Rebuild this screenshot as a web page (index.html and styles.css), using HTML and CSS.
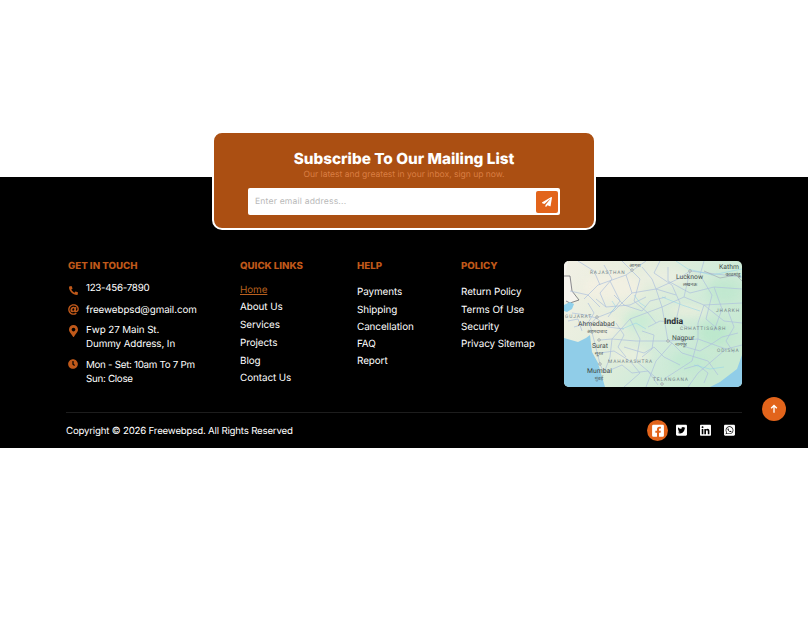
FILE: index.html
```html
<!DOCTYPE html>
<html lang="en">
<head>
<meta charset="utf-8">
<title>Footer</title>
<link rel="stylesheet" href="styles.css">
</head>
<body>
<div class="top">
  <section class="card">
    <h2 class="card-title">Subscribe To Our Mailing List</h2>
    <p class="card-sub">Our latest and greatest in your inbox, sign up now.</p>
    <form class="sub-form">
      <span class="placeholder">Enter email address...</span>
      <span class="send">
        <svg class="send-icon" viewBox="0 0 512 512"><path d="M476 3.2L12.5 270.6c-18.1 10.4-15.8 35.6 2.2 43.2L121 358.4l287.3-253.2c5.5-4.9 13.3 2.6 8.6 8.3L176 407v80.5c0 23.6 28.5 32.9 42.5 15.8L282 426l124.6 52.2c14.2 6 30.4-2.9 33-18.2l72-432C515 7.8 493.3-6.8 476 3.2z"/></svg>
      </span>
    </form>
  </section>
</div>
<footer class="footer">
  <div class="columns">
    <div class="col col-contact">
      <h3 class="heading">GET IN TOUCH</h3>
      <ul class="contact">
        <li class="contact-item contact-phone"><span class="c-icon"><svg class="ic-phone" viewBox="0 0 512 512"><path transform="translate(512 0) scale(-1 1)" d="M493.4 24.6l-104-24c-11.3-2.6-22.9 3.3-27.5 13.9l-48 112c-4.2 9.8-1.4 21.3 6.9 28l60.6 49.6c-36 76.7-98.9 140.5-177.2 177.2l-49.6-60.6c-6.8-8.3-18.2-11.1-28-6.9l-112 48C3.9 366.5-2 378.1.6 389.4l24 104C27.1 504.2 36.7 512 48 512c256.1 0 464-207.5 464-464 0-11.2-7.7-20.9-18.6-23.4z"/></svg></span><span class="c-tight">123-456-7890</span></li>
        <li class="contact-item"><span class="c-icon"><svg class="ic-at" viewBox="0 0 512 512"><path d="M256 8C118.941 8 8 118.919 8 256c0 137.059 110.919 248 248 248 48.154 0 95.342-14.14 135.408-40.223 12.005-7.815 14.625-24.288 5.552-35.372l-10.177-12.433c-7.671-9.371-21.179-11.667-31.373-5.129C325.92 429.757 291.314 440 256 440c-101.458 0-184-82.542-184-184S154.542 72 256 72c100.139 0 184 57.619 184 160 0 38.786-21.093 79.742-58.17 83.693-17.349-.454-16.91-12.857-13.476-30.024l23.433-121.11C394.653 149.75 383.308 136 368.225 136h-44.981a13.518 13.518 0 0 0-13.432 11.993l-.01.092c-14.697-17.901-40.448-21.775-59.971-21.775-74.58 0-137.831 62.234-137.831 151.46 0 65.303 36.785 105.87 96 105.87 26.984 0 57.369-15.637 74.991-38.333 9.522 34.104 40.613 34.103 70.71 34.103C462.609 379.41 504 307.798 504 232 504 95.653 394.023 8 256 8zm-21.68 304.43c-22.249 0-36.07-15.623-36.07-40.771 0-44.993 30.779-72.729 58.63-72.729 22.292 0 35.601 15.241 35.601 40.77 0 45.061-33.875 72.73-58.161 72.73z"/></svg></span><span>freewebpsd@gmail.com</span></li>
        <li class="contact-item"><span class="c-icon"><svg class="ic-pin" viewBox="0 0 384 512"><path d="M172.268 501.67C26.97 291.031 0 268.413 0 192 0 85.961 85.961 0 192 0s192 85.961 192 192c0 76.413-26.97 99.031-172.268 309.67-9.535 13.774-29.93 13.773-39.464 0zM192 272c44.183 0 80-35.817 80-80s-35.817-80-80-80-80 35.817-80 80 35.817 80 80 80z"/></svg></span><span>Fwp 27 Main St.<br>Dummy Address, In</span></li>
        <li class="contact-item"><span class="c-icon"><svg class="ic-clock" viewBox="0 0 512 512"><path d="M256,8C119,8,8,119,8,256S119,504,256,504,504,393,504,256,393,8,256,8Zm92.49,313h0l-20,25a16,16,0,0,1-22.49,2.5h0l-67-49.72a40,40,0,0,1-15-31.23V112a16,16,0,0,1,16-16h32a16,16,0,0,1,16,16V256l58,42.5A16,16,0,0,1,348.49,321Z"/></svg></span><span class="c-tight">Mon - Set: 10am To 7 Pm<br>Sun: Close</span></li>
      </ul>
    </div>
    <div class="col">
      <h3 class="heading">QUICK LINKS</h3>
      <ul class="links links-quick">
        <li><a class="link link-active">Home</a></li>
        <li><a class="link">About Us</a></li>
        <li><a class="link">Services</a></li>
        <li><a class="link">Projects</a></li>
        <li><a class="link">Blog</a></li>
        <li><a class="link">Contact Us</a></li>
      </ul>
    </div>
    <div class="col">
      <h3 class="heading">HELP</h3>
      <ul class="links">
        <li><a class="link">Payments</a></li>
        <li><a class="link">Shipping</a></li>
        <li><a class="link">Cancellation</a></li>
        <li><a class="link">FAQ</a></li>
        <li><a class="link">Report</a></li>
      </ul>
    </div>
    <div class="col">
      <h3 class="heading">POLICY</h3>
      <ul class="links">
        <li><a class="link">Return Policy</a></li>
        <li><a class="link">Terms Of Use</a></li>
        <li><a class="link">Security</a></li>
        <li><a class="link">Privacy Sitemap</a></li>
      </ul>
    </div>
    <div class="map">
      <svg class="map-svg" viewBox="0 0 178 126">
        <defs>
          <linearGradient id="land" x1="0" y1="0" x2="1" y2="0.5">
            <stop offset="0" stop-color="#f2f0e5"/>
            <stop offset="0.4" stop-color="#e6eedd"/>
            <stop offset="0.75" stop-color="#d0ebd9"/>
            <stop offset="1" stop-color="#c8e9d3"/>
          </linearGradient>
          <filter id="soft"><feGaussianBlur stdDeviation="0.3"/></filter>
          <filter id="softer"><feGaussianBlur stdDeviation="4"/></filter>
        </defs>
        <rect width="178" height="126" fill="url(#land)"/>
        <g filter="url(#softer)" opacity="0.75">
          <ellipse cx="48" cy="26" rx="30" ry="14" fill="#f4f0e3"/>
          <ellipse cx="100" cy="16" rx="26" ry="9" fill="#ecefe2"/>
          <ellipse cx="125" cy="50" rx="20" ry="6" fill="#eeeedd"/>
          <ellipse cx="40" cy="66" rx="14" ry="10" fill="#f2efe1"/>
          <ellipse cx="66" cy="95" rx="20" ry="8" fill="#edf0df"/>
          <ellipse cx="75" cy="60" rx="14" ry="10" fill="#c4ebd3"/>
          <ellipse cx="150" cy="72" rx="16" ry="12" fill="#b8e7ca"/>
          <ellipse cx="125" cy="100" rx="18" ry="10" fill="#bfe9d0"/>
          <ellipse cx="160" cy="30" rx="16" ry="12" fill="#bde7cd"/>
        </g>
        <path d="M0 0H4L1 15H6L8 30L14 38L5 42L0 40Z" fill="#f6f4ee"/>
        <path d="M0 15H6L8 30L15 39L6 42L2 40" fill="none" stroke="#5b5b66" stroke-width="0.7"/>
        <path d="M0 44L6 41L10 43L8 48L3 51L0 50Z" fill="#8fd0ea" filter="url(#soft)"/>
        <path d="M0 77L14 81L22 77L26 74L28 91L34 102L41 126H0Z" fill="#90cde8"/>
        <path d="M178 94L173 108L156 121L146 126H178Z" fill="#90cde8"/>
        <g filter="url(#soft)" fill="none" stroke="#aec0dc" stroke-width="0.7" stroke-linejoin="round">
          <path d="M20 38L34 24L62 14L82 0"/>
          <path d="M62 14L68 32L50 50L32 57L26 64L30 79L36 103L40 112"/>
          <path d="M68 32L92 28L114 18L126 10L178 16"/>
          <path d="M92 28L98 46L104 80L108 82L92 100L82 126"/>
          <path d="M126 10L120 36L140 44L178 42"/>
          <path d="M120 36L98 46L66 58L48 78L46 96L40 112"/>
          <path d="M36 79L48 78L72 80L104 80L134 78L162 88L178 84"/>
          <path d="M66 58L76 78L72 100L96 120"/>
          <path d="M134 78L128 100L100 118"/>
          <path d="M140 44L134 62L134 78"/>
          <path d="M140 44L160 60L178 62"/>
          <path d="M46 20L56 40L44 56"/>
          <path d="M78 6L88 18L92 28L112 34"/>
          <path d="M32 38L42 46L66 44L82 36"/>
          <path d="M104 6L104 20L126 32L150 26L178 28"/>
          <path d="M36 92L50 90L66 100L76 112L60 126"/>
          <path d="M108 82L118 92L144 100L154 114"/>
          <path d="M162 88L148 100L134 112L124 126"/>
          <path d="M84 66L96 60L116 62L126 68"/>
          <path d="M150 26L158 48L150 70"/>
          <path d="M14 0L30 10L36 24"/>
          <path d="M6 30L24 34L36 46"/>
          <path d="M8 52L22 54L32 57L44 66L60 68"/>
          <path d="M10 66L24 62L30 52L24 42"/>
          <path d="M40 4L48 18L36 32L42 46"/>
          <path d="M58 0L76 18L70 40L84 52L92 62"/>
          <path d="M96 0L90 12L108 24L116 42L112 60"/>
          <path d="M140 0L136 14L148 34L142 58L156 70"/>
          <path d="M60 86L80 92L90 86L100 96L116 104"/>
          <path d="M44 110L58 104L68 112L84 110L94 124"/>
          <path d="M50 34L60 44L78 50L86 40L102 36"/>
          <path d="M116 74L122 86L136 90L146 84L158 76L174 72"/>
          <path d="M120 108L134 104L144 112L140 122"/>
          <path d="M164 50L170 66L162 80L170 92"/>
          <path d="M4 60L14 58L18 70"/>
          <path d="M52 62L60 74L54 86L62 96"/>
          <path d="M78 70L90 74L88 88L78 96"/>
        </g>
        <g filter="url(#soft)" fill="none" stroke="#8fd0ea" stroke-width="0.5">
          <path d="M112 0L124 8L148 14L178 8"/>
          <path d="M82 68L72 62L58 68"/>
          <path d="M130 104L146 108L160 106"/>
          <path d="M98 36L118 44L136 50"/>
          <path d="M48 40L52 46L46 52"/>
          <path d="M70 34L76 42L82 46"/>
        </g>
        <path d="M140 10L156 17L172 14L178 20" fill="none" stroke="#9aa0ae" stroke-width="0.6" filter="url(#soft)"/>
        <g class="map-labels">
          <text class="m-state" x="26" y="13">RAJASTHAN</text>
          <text class="m-state" x="1" y="57">GUJARAT</text>
          <text class="m-state" x="44" y="102">MAHARASHTRA</text>
          <text class="m-state" x="89" y="120">TELANGANA</text>
          <text class="m-state" x="116" y="69">CHHATTISGARH</text>
          <text class="m-state" x="152" y="51">JHARKH</text>
          <text class="m-state" x="153" y="91">ODISHA</text>
          <text class="m-city" x="155" y="8">Kathm</text>
          <text class="m-city" x="14" y="65">Ahmedabad</text>
          <text class="m-city" x="112" y="18">Lucknow</text>
          <text class="m-city" x="108" y="79">Nagpur</text>
          <text class="m-city" x="28" y="87">Surat</text>
          <text class="m-city" x="23" y="112">Mumbai</text>
          <text class="m-country" x="100" y="63">India</text>
          <text class="m-hi" x="33" y="72">अहमदाबाद</text>
          <text class="m-hi" x="126" y="25">लखनऊ</text>
          <text class="m-hi" x="169" y="15">काठमांडू</text>
          <text class="m-hi" x="117" y="85">नागपूर</text>
          <text class="m-hi" x="35" y="94">सूरत</text>
          <text class="m-hi" x="35" y="119">मुंबई</text>
          <text class="m-hi" x="71" y="6">आगरा</text>
        </g>
        <g fill="#fff" stroke="#6d7a7a" stroke-width="0.6">
          <circle cx="33" cy="56" r="1.2"/><circle cx="126" cy="10" r="1.2"/><circle cx="104" cy="80" r="1.2"/>
          <circle cx="35" cy="79" r="1.2"/><circle cx="36" cy="103" r="1.2"/><circle cx="68" cy="9" r="1.2"/><circle cx="98" cy="123" r="1.2"/>
        </g>
      </svg>
    </div>
  </div>
  <div class="bottom">
    <p class="copy">Copyright © 2026 Freewebpsd. All Rights Reserved</p>
    <div class="social">
      <span class="soc soc-active"><svg class="soc-icon" viewBox="0 0 448 512"><path d="M400 32H48A48 48 0 0 0 0 80v352a48 48 0 0 0 48 48h137.25V327.69h-63V256h63v-54.64c0-62.15 37-96.48 93.67-96.48 27.14 0 55.52 4.84 55.52 4.84v61h-31.27c-30.81 0-40.42 19.12-40.42 38.73V256h68.78l-11 71.69h-57.78V480H400a48 48 0 0 0 48-48V80a48 48 0 0 0-48-48z"/></svg></span>
      <span class="soc"><svg class="soc-icon" viewBox="0 0 448 512"><path d="M400 32H48C21.5 32 0 53.5 0 80v352c0 26.5 21.5 48 48 48h352c26.5 0 48-21.5 48-48V80c0-26.5-21.5-48-48-48zm-48.9 158.8c.2 2.8.2 5.7.2 8.5 0 86.7-66 186.6-186.6 186.6-37.2 0-71.7-10.8-100.7-29.4 5.3.6 10.4.8 15.8.8 30.7 0 58.9-10.4 81.4-28-28.8-.6-53-19.5-61.3-45.5 10.1 1.5 19.2 1.5 29.6-1.2-30-6.1-52.5-32.5-52.5-64.4v-.8c8.7 4.9 18.9 7.9 29.6 8.3a65.447 65.447 0 0 1-29.2-54.6c0-12.2 3.2-23.4 8.9-33.1 32.3 39.8 80.8 65.8 135.2 68.6-9.3-44.5 24-80.6 64-80.6 18.9 0 35.9 7.9 47.9 20.7 14.8-2.8 29-8.3 41.6-15.8-4.9 15.2-15.1 28-28.6 36.1 13.1-1.4 25.8-5 37.6-10.1-8.9 13.1-20.1 24.7-32.9 34z"/></svg></span>
      <span class="soc"><svg class="soc-icon" viewBox="0 0 448 512"><path d="M416 32H31.9C14.3 32 0 46.5 0 64.3v383.4C0 465.5 14.3 480 31.9 480H416c17.6 0 32-14.5 32-32.3V64.3c0-17.8-14.4-32.3-32-32.3zM135.4 416H69V202.2h66.5V416zm-33.2-243c-21.3 0-38.5-17.3-38.5-38.5S80.9 96 102.2 96c21.2 0 38.5 17.3 38.5 38.5 0 21.3-17.2 38.5-38.5 38.5zm282.1 243h-66.4V312c0-24.8-.5-56.7-34.5-56.7-34.6 0-39.9 27-39.9 54.9V416h-66.4V202.2h63.7v29.2h.9c8.9-16.8 30.6-34.5 62.9-34.5 67.2 0 79.7 44.3 79.7 101.9V416z"/></svg></span>
      <span class="soc"><svg class="soc-icon" viewBox="0 0 448 512"><path d="M224 122.8c-72.7 0-131.8 59.1-131.9 131.8 0 24.9 7 49.2 20.2 70.1l3.1 5-13.3 48.6 49.9-13.1 4.8 2.9c20.2 12 43.4 18.4 67.1 18.4h.1c72.6 0 133.3-59.1 133.3-131.8 0-35.2-15.2-68.3-40.1-93.2-25-25-58-38.7-93.2-38.7zm77.5 188.4c-3.3 9.3-19.1 17.7-26.7 18.8-12.6 1.9-22.4.9-47.5-9.9-39.7-17.2-65.7-57.2-67.7-59.8-2-2.6-16.2-21.5-16.2-41s10.2-29.1 13.9-33.1c3.6-4 7.9-5 10.6-5 2.6 0 5.3 0 7.6.1 2.4.1 5.7-.9 8.9 6.8 3.3 7.9 11.2 27.4 12.2 29.4s1.7 4.3.3 6.9c-7.6 15.2-15.7 14.6-11.6 21.6 15.3 26.3 30.6 35.4 53.9 47.1 4 2 6.3 1.7 8.6-1 2.3-2.6 9.9-11.6 12.5-15.5 2.6-4 5.3-3.3 8.9-2 3.6 1.3 23.1 10.9 27.1 12.9s6.6 3 7.6 4.6c.9 1.9.9 9.9-2.4 19.1zM400 32H48C21.5 32 0 53.5 0 80v352c0 26.5 21.5 48 48 48h352c26.5 0 48-21.5 48-48V80c0-26.5-21.5-48-48-48zM223.9 413.2c-26.6 0-52.7-6.7-75.8-19.3L64 416l22.5-82.2c-13.9-24-21.2-51.3-21.2-79.3C65.4 167.1 136.5 96 223.9 96c42.4 0 82.2 16.5 112.2 46.5 29.9 30 47.9 69.8 47.9 112.2 0 87.4-72.7 158.5-160.1 158.5z"/></svg></span>
    </div>
  </div>
  <span class="to-top"><svg class="to-top-icon" viewBox="0 0 12 12"><path d="M6 10.5V2M2.6 5.2L6 1.8l3.4 3.4"/></svg></span>
</footer>
</body>
</html>
```
FILE: styles.css
```css
* { box-sizing: border-box; }
html, body { margin: 0; padding: 0; }
body {
  background: #fff;
  font-family: "Inter", "Liberation Sans", sans-serif;
  color: #fff;
  min-height: 632px;
  text-rendering: geometricPrecision;
}
ul { list-style: none; margin: 0; padding: 0; }
h2, h3, p { margin: 0; }

.top { padding-top: 131px; height: 177px; position: relative; z-index: 1; }
.card {
  width: 384px;
  height: 99px;
  margin: 0 0 0 212px;
  background: #ab4f12;
  border: 2px solid #fff;
  border-radius: 10px;
  padding: 17px 34px 0 34px;
  text-align: center;
}
.card-title { font-size: 15.3px; font-weight: 800; line-height: 18px; }
.card-sub { font-size: 8.5px; line-height: 11px; color: #da7e42; margin-top: 2px; }
.sub-form {
  margin-top: 7px;
  height: 27px;
  background: #fff;
  border-radius: 2px;
  display: flex;
  align-items: center;
  justify-content: space-between;
  padding: 0 2px 0 7px;
}
.placeholder { font-size: 8.6px; color: #b9b9b9; letter-spacing: 0.02em; }
.send {
  width: 22px; height: 22px;
  background: #e2641b;
  border-radius: 2px;
  display: flex; align-items: center; justify-content: center;
}
.send-icon { width: 10px; height: 10px; fill: #fff; }

.footer {
  background: #000;
  height: 271px;
  padding: 84px 66px 0;
  position: relative;
}
.columns { display: grid; grid-template-columns: 174px 117px 104px 103px 178px; height: 151px; }
.col-contact { padding-left: 2px; }
.heading {
  font-size: 9.7px; font-weight: 800; line-height: 12px;
  color: #c0591a;
  white-space: nowrap;
}
.contact { margin-top: 8.5px; display: flex; flex-direction: column; gap: 6.5px; }
.contact-item { display: flex; font-size: 9.8px; line-height: 14px; white-space: nowrap; letter-spacing: -0.08px; }
.c-tight { letter-spacing: -0.3px; }
.contact-phone { margin-bottom: 1.5px; }
.c-icon { width: 18px; flex: none; }
.c-icon svg { display: block; fill: #c0591a; }
.ic-phone { width: 9px; height: 9px; margin: 4px 0 0 1px; }
.ic-at { width: 11px; height: 11px; margin: 0.5px 0 0 0; }
.ic-pin { width: 9px; height: 12px; margin: 1px 0 0 1px; }
.ic-clock { width: 10px; height: 10px; margin: 0.5px 0 0 0; }

.links { margin-top: 11.3px; }
.links li { height: 17.25px; line-height: 17.25px; font-size: 9.9px; white-space: nowrap; letter-spacing: -0.08px; }
.links-quick { margin-top: 8.8px; }
.links-quick li { height: 17.7px; line-height: 17.7px; }
.link { color: #fff; }
.link-active { color: #b9601f; text-decoration: underline; }

.map { width: 178px; height: 126px; border-radius: 5px; overflow: hidden; }
.map-svg { display: block; width: 178px; height: 126px; }
.map-labels text { font-family: "Roboto", "Liberation Sans", sans-serif; }
.m-state { font-size: 4.8px; letter-spacing: 0.9px; fill: #76858a; }
.m-city { font-size: 6.8px; fill: #3f4a4a; }
.m-country { font-size: 8.6px; font-weight: 700; fill: #2a2f33; }
.m-hi { font-size: 5px; fill: #4d5858; text-anchor: middle; }

.bottom {
  border-top: 1px solid #1d1d1d;
  height: 36px;
  display: flex;
  align-items: center;
  justify-content: space-between;
}
.copy { font-size: 9.7px; letter-spacing: -0.2px; white-space: nowrap; margin-top: 2px; }
.social { display: flex; align-items: center; gap: 3px; margin-right: 2px; }
.soc { width: 21px; height: 21px; display: flex; align-items: center; justify-content: center; border-radius: 50%; }
.soc-active { background: #e2641b; }
.soc-icon { width: 11px; height: 12.5px; fill: #fff; display: block; }
.soc-active .soc-icon { width: 12px; height: 13.5px; }
.to-top {
  position: absolute;
  left: 762px; top: 220px;
  width: 24px; height: 24px;
  border-radius: 50%;
  background: #e2641b;
  display: flex; align-items: center; justify-content: center;
}
.to-top-icon { width: 10px; height: 10px; fill: none; stroke: #fff; stroke-width: 1.6; }
```
